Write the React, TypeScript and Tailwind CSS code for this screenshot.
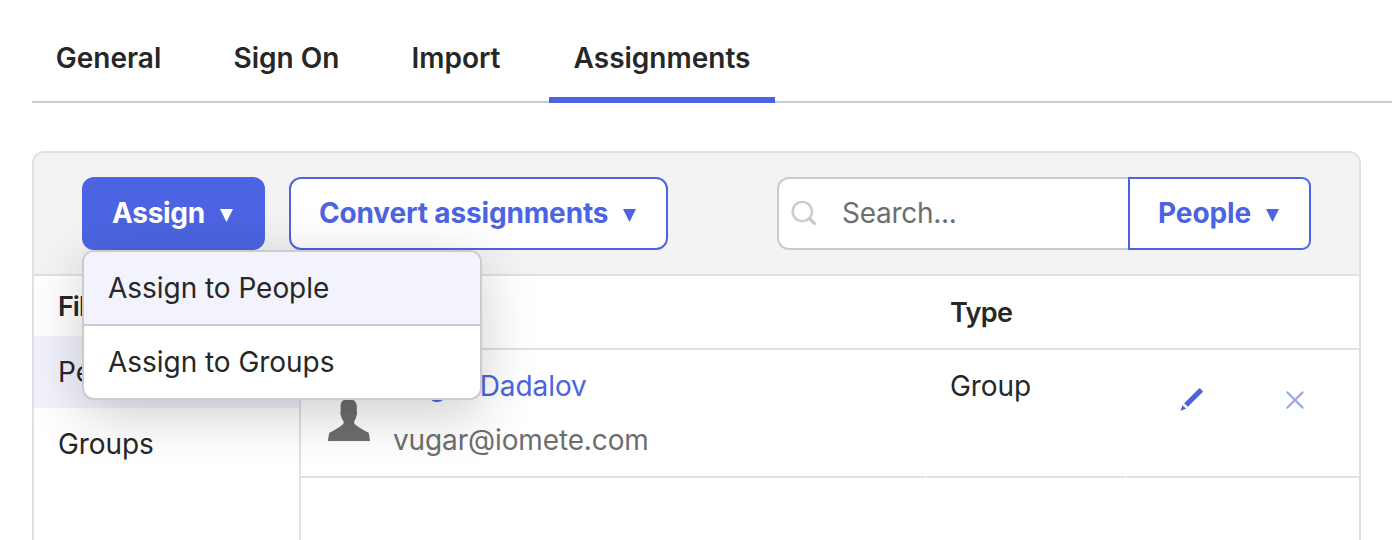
import React from "react";

function Caret() {
  return (
    <svg className="mt-[3px] h-[13px] w-[13px] shrink-0" viewBox="0 0 13 13" fill="currentColor" aria-hidden="true">
      <path d="M0 0H13L6.5 13Z" />
    </svg>
  );
}

function Tab({ label, className, active = false }: { label: string; className: string; active?: boolean }) {
  return (
    <div
      className={`relative -mb-0.5 flex h-[103px] shrink-0 justify-center whitespace-nowrap pt-[42px] font-semibold leading-8 tracking-normal ${className} ${
        active ? "border-b-[6px] border-[#4c64e1]" : ""
      }`}
    >
      {label}
    </div>
  );
}

function AssignMenu() {
  return (
    <div className="absolute top-[73px] left-0 z-10 h-[150px] w-[400px] rounded-[12px] border-2 border-[#cbcbcb] bg-white text-[#272727] shadow-[0_14px_56px_rgba(0,0,0,0.2)]">
      <div className="h-[74px] rounded-t-[10px] border-b-2 border-[#cbcbcb] bg-[#f3f3fd] pt-5 pl-6 font-normal leading-8 tracking-[-0.04px]">
        Assign to People
      </div>
      <div className="pt-5 pl-6 font-normal leading-8 tracking-[-0.04px]">Assign to Groups</div>
    </div>
  );
}

function Toolbar() {
  return (
    <div className="flex h-[123px] items-start rounded-t-[10px] border-b-2 border-[#e0e0e0] bg-[#f3f3f3] pt-6 pr-12 pl-12">
      <div className="relative z-10 shrink-0">
        <button className="flex h-[73px] w-[183px] items-center rounded-[12px] bg-[#4c64e1] pl-[30px] font-bold tracking-[-0.3px] text-white">
          <span className="-mt-0.5 w-[108px] text-left">Assign</span>
          <Caret />
        </button>
        <AssignMenu />
      </div>
      <button className="ml-6 flex h-[73px] w-[379px] shrink-0 items-center rounded-[12px] border-2 border-[#4c64e1] bg-white pl-7 font-bold tracking-[-0.16px] text-[#4c64e1]">
        <span className="-mt-0.5 w-[304px] text-left whitespace-nowrap">Convert assignments</span>
        <Caret />
      </button>
      <div className="ml-auto flex">
        <div className="flex h-[73px] w-[351px] items-center rounded-l-[12px] border-2 border-r-0 border-[#cbcbcb] bg-white pl-3 text-[#6e6e6e]">
          <svg className="-mt-0.5 mr-[25px] h-[26px] w-[26px]" viewBox="0 0 26 26" fill="none" stroke="#cbcbcb" aria-hidden="true">
            <circle cx="11.3" cy="11.5" r="9.6" strokeWidth="2.4" />
            <path d="M18.7 18.8L23.4 23.4" strokeWidth="3.4" strokeLinecap="round" />
          </svg>
          <span className="-mt-0.5 tracking-[-0.28px]">Search...</span>
        </div>
        <button className="flex h-[73px] w-[183px] items-center rounded-r-[9px] border-2 border-[#4c64e1] bg-white pl-7 font-bold tracking-[-0.1px] text-[#4c64e1]">
          <span className="-mt-0.5 w-[108px] text-left">People</span>
          <Caret />
        </button>
      </div>
    </div>
  );
}

function Sidebar() {
  return (
    <div className="w-[267px] shrink-0 border-r-2 border-[#e0e0e0]">
      <div className="h-[60px] pt-[15px] pl-6 text-[27px] font-semibold leading-8 tracking-[-1px]">Filters</div>
      <div className="h-[72px] bg-[#f2f2fd] pt-5 pl-6 leading-8">People</div>
      <div className="h-[72px] pt-5 pl-6 leading-8">Groups</div>
    </div>
  );
}

function Assignments() {
  return (
    <div className="min-w-0 flex-1">
      <div className="flex h-[74px] border-b-2 border-[#e0e0e0] pt-[21px] text-[27px] font-semibold leading-8 tracking-[-0.6px]">
        <div className="w-[649px] pl-6">Person</div>
        <div>Type</div>
      </div>
      <div className="flex h-[128px]">
        <div className="flex w-[624px] border-b-2 border-[#e0e0e0] pl-[27px]">
          <svg className="mt-[49px] h-[42px] w-[42px] shrink-0" viewBox="0 0 42 42" fill="#6e6e6e" aria-hidden="true">
            <path d="M20.5 0C15 0 12.6 3 12.6 7V12.4C12 13 12.5 15.5 13.1 17.2C13.6 19.2 14.6 20.6 15.6 22.4C15.8 24 15.4 25 14.4 25.7C10.5 28.6 6 31.5 1.4 33.7C.7 36 .2 39 0 42H42C41.8 39 41.3 36 40.6 33.7C36 31.5 31.5 28.6 27.4 25.7C26.4 25 26 24 26.2 22.4C27.2 20.6 27.9 19.2 28.3 17.2C29 15.5 29.4 13 28.8 12.4V7C28.6 3 26.1 0 20.5 0Z" />
          </svg>
          <div className="ml-[23px] pt-5 leading-8">
            <div className="text-[#4c64e1]">Vugar Dadalov</div>
            <div className="mt-[22px] tracking-[-0.13px] text-[#6e6e6e]">vugar@iomete.com</div>
          </div>
        </div>
        <div className="ml-px w-[199px] border-b-2 border-[#e0e0e0] pt-5 pl-6 leading-8">Group</div>
        <div className="ml-px flex flex-1 border-b-2 border-[#e0e0e0] pt-[38px] pl-[54px]">
          <svg className="h-6 w-6" viewBox="0 0 24 24" fill="#4c64e1" aria-hidden="true">
            <path d="M4.2 15.3L18.9 .6Q19.6 0 20.3 .6L22.6 2.9Q23.2 3.6 22.6 4.3L7.9 18.8ZM2.5 17.2L6.2 20.8L.5 22.7Z" />
          </svg>
          <svg className="mt-[3px] ml-[82px] h-[18px] w-[18px]" viewBox="0 0 18 18" fill="none" stroke="#9baaf1" strokeWidth="2.2" strokeLinecap="round" aria-hidden="true">
            <path d="M1.4 1.4L16.6 16.6M16.6 1.4L1.4 16.6" />
          </svg>
        </div>
      </div>
    </div>
  );
}

export default function App() {
  return (
    <div className="h-[540px] w-[1392px] overflow-hidden bg-white font-['Inter',sans-serif] text-[28px] leading-8 tracking-[-0.08px] text-[#272727]">
      <nav className="ml-8 flex h-[103px] border-b-2 border-[#cbcbcb]">
        <Tab label="General" className="w-[153px]" />
        <Tab label="Sign On" className="ml-6 w-[155px]" />
        <Tab label="Import" className="ml-[23px] w-[138px]" />
        <Tab label="Assignments" className="ml-6 w-[226px]" active />
      </nav>
      <main className="mt-12 ml-8 flex h-[450px] w-[1329px] flex-col rounded-t-[12px] border-2 border-[#e0e0e0]">
        <Toolbar />
        <div className="flex flex-1">
          <Sidebar />
          <Assignments />
        </div>
      </main>
    </div>
  );
}
